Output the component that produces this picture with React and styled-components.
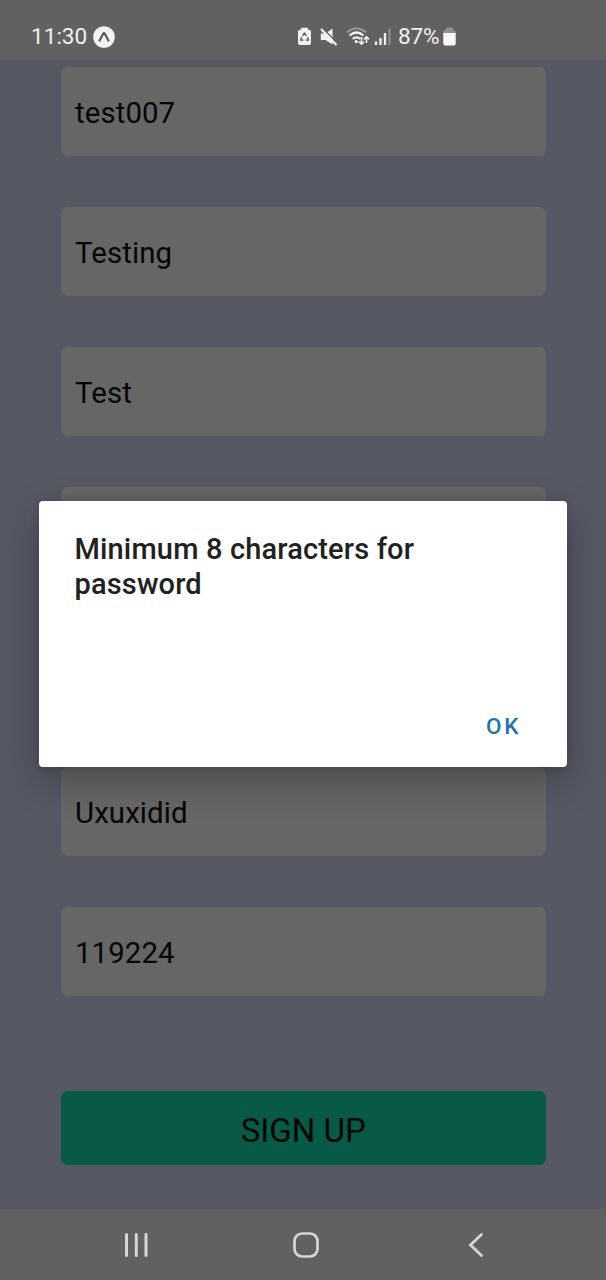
import React from "react";
import styled, { createGlobalStyle } from "styled-components";

const GlobalStyle = createGlobalStyle`
  * { box-sizing: border-box; }
  body { margin: 0; background: #565864; font-family: Roboto, "Liberation Sans", sans-serif; }
`;

const Screen = styled.div`
  position: relative;
  width: 606px;
  height: 1280px;
  display: flex;
  flex-direction: column;
  overflow: hidden;
  background: #565864;
`;

const StatusBar = styled.header`
  height: 60px;
  flex: none;
  display: flex;
  align-items: center;
  padding: 13px 150px 0 31px;
  background: #616161;
  color: #f0f0f0;
  font-size: 22.6px;
  line-height: 27px;
`;

const Clock = styled.span`
  width: 56px;
  margin-right: 6px;
  white-space: nowrap;
`;

const StatusIcons = styled.div`
  margin-left: auto;
  display: flex;
  align-items: center;
`;

const Glyph = styled.svg`
  display: block;
  flex: none;
  margin-left: ${(p) => p.$gap || 0}px;
`;

const Percent = styled.span`
  width: 43px;
  margin-left: 7px;
  white-space: nowrap;
  letter-spacing: -0.2px;
`;

const Form = styled.main`
  flex: 1;
  min-height: 0;
  display: flex;
  flex-direction: column;
  gap: 51.5px;
  padding: 7.2px 60.5px 0 61px;
`;

const Field = styled.div`
  height: 88.5px;
  flex: none;
  display: flex;
  align-items: center;
  padding: 3px 14px 0;
  border-radius: 7px;
  background: #666666;
  color: #050505;
  font-size: 29.4px;
  letter-spacing: 0.1px;
`;

const SignUp = styled.button`
  height: 73.5px;
  flex: none;
  margin-top: 44px;
  padding: 6px 0 0;
  border: 0;
  border-radius: 7px;
  background: #085a46;
  color: #050505;
  font-family: inherit;
  font-size: 33px;
`;

const NavBar = styled.nav`
  height: 71px;
  flex: none;
  display: flex;
  align-items: center;
  justify-content: space-between;
  padding: 0 115px 0 121px;
  background: #616161;
`;

const Overlay = styled.div`
  position: absolute;
  inset: 0;
  padding: 501px 39px 0;
`;

const Dialog = styled.section`
  height: 266px;
  display: flex;
  flex-direction: column;
  justify-content: space-between;
  padding: 31px 38px 23px 35.5px;
  border-radius: 4px;
  background: #ffffff;
  box-shadow: 0 14px 36px rgba(0, 0, 0, 0.26), 0 0 10px rgba(0, 0, 0, 0.14);
`;

const Title = styled.h1`
  margin: 0;
  color: #212121;
  font-size: 29px;
  font-weight: 500;
  line-height: 35px;
  letter-spacing: 0.16px;
`;

const Confirm = styled.button`
  align-self: flex-end;
  padding: 0 8px;
  border: 0;
  background: none;
  color: #2472a8;
  font-family: inherit;
  font-size: 22.5px;
  font-weight: 500;
  line-height: 36px;
  letter-spacing: 2.6px;
`;

const fields = ["test007", "Testing", "Test", "", "", "Uxuxidid", "119224"];

function AppBadge() {
  return (
    <Glyph width="22" height="22" viewBox="0 0 22 22">
      <circle cx="11" cy="11" r="10.8" fill="#f2f2f2" />
      <path d="M6.6 14.5 10.2 7.7Q11 6.3 11.8 7.7L15.4 14.5" fill="none" stroke="#595959" strokeWidth="2.2" strokeLinecap="round" />
    </Glyph>
  );
}

function BatterySaver() {
  return (
    <Glyph width="13" height="19" viewBox="0 0 13 19">
      <path d="M4 .8h5a1 1 0 0 1 1 1v1h1a2 2 0 0 1 2 2v11.200a2 2 0 0 1-2 2H2a2 2 0 0 1-2-2V4.800a2 2 0 0 1 2-2h1v-1a1 1 0 0 1 1-1z" fill="#f2f2f2" />
      <path d="M4.500 8.800 6.500 6l2 2.800M9.600 10.300l1 2.900H7.600M5.500 13.200H2.500l1.200-2.900" fill="none" stroke="#595959" strokeWidth="1.300" strokeLinejoin="round" />
    </Glyph>
  );
}

function Muted() {
  return (
    <Glyph $gap={9} width="18" height="18" viewBox="0 0 18 18">
      <path d="M.8 5.5h4.700l7-5v16l-7-4.500H.8z" fill="#f2f2f2" />
      <path d="M3.200.8 18 15.800" stroke="#616161" strokeWidth="1.400" />
      <path d="M1 1 16.500 17" stroke="#f2f2f2" strokeWidth="2.200" />
    </Glyph>
  );
}

function Wifi() {
  return (
    <Glyph $gap={8} width="24" height="19" viewBox="0 0 24 19">
      <g fill="none" strokeWidth="2.2">
        <path d="M1 5.2Q10.5-2.5 20 5.2" stroke="#929292" />
        <path d="M3.5 8.5q7-6 14 0M6.7 11.800q3.800-3 7.600 0" stroke="#f2f2f2" />
      </g>
      <circle cx="10.300" cy="14.600" r="1.700" fill="#f2f2f2" />
      <path d="M15.500 10v7M13 14.600l2.500 2.600 2.500-2.600M20.500 16v-6M18 12.400l2.500-2.600 2.500 2.600" fill="none" stroke="#f2f2f2" strokeWidth="1.600" />
    </Glyph>
  );
}

function Signal() {
  return (
    <Glyph $gap={4} width="17" height="18" viewBox="0 0 17 18">
      <path d="M2 13.500v3.500M6.500 10v7M11 5v12" stroke="#f2f2f2" strokeWidth="2.300" />
      <path d="M15.500 .5v16.500" stroke="#929292" strokeWidth="2" />
    </Glyph>
  );
}

function Battery() {
  return (
    <Glyph $gap={2} width="13" height="19" viewBox="0 0 13 19">
      <path d="M.3 6V5A2 2 0 0 1 2.300 3H3v-1A1.500 1.500 0 0 1 4.500.5h4A1.500 1.500 0 0 1 10 2v1h.7a2 2 0 0 1 2 2v1z" fill="#929292" />
      <path d="M.3 6h12.400v10.500a2 2 0 0 1-2 2H2.300a2 2 0 0 1-2-2z" fill="#f8f8f8" />
    </Glyph>
  );
}

function Recents() {
  return (
    <Glyph width="30" height="30" viewBox="0 0 30 30">
      <path d="M5.500 4.500v21M15.300 4.500v21M25 4.500v21" stroke="#d6d6d6" strokeWidth="3" strokeLinecap="round" />
    </Glyph>
  );
}

function Home() {
  return (
    <Glyph width="30" height="30" viewBox="0 0 30 30">
      <rect x="3.5" y="3.5" width="23" height="23" rx="7.5" fill="none" stroke="#d6d6d6" strokeWidth="2.7" />
    </Glyph>
  );
}

function Back() {
  return (
    <Glyph width="30" height="30" viewBox="0 0 30 30">
      <path d="M20.500 4.500 9.500 15l11 10.500" fill="none" stroke="#d6d6d6" strokeWidth="2.800" strokeLinecap="round" />
    </Glyph>
  );
}

export default function App() {
  return (
    <>
      <GlobalStyle />
      <Screen>
        <StatusBar>
          <Clock>11:30</Clock>
          <AppBadge />
          <StatusIcons>
            <BatterySaver />
            <Muted />
            <Wifi />
            <Signal />
            <Percent>87%</Percent>
            <Battery />
          </StatusIcons>
        </StatusBar>
        <Form>
          {fields.map((value, i) => (
            <Field key={i}>{value}</Field>
          ))}
          <SignUp>SIGN UP</SignUp>
        </Form>
        <NavBar>
          <Recents />
          <Home />
          <Back />
        </NavBar>
        <Overlay>
          <Dialog role="alertdialog">
            <Title>Minimum 8 characters for password</Title>
            <Confirm>OK</Confirm>
          </Dialog>
        </Overlay>
      </Screen>
    </>
  );
}
